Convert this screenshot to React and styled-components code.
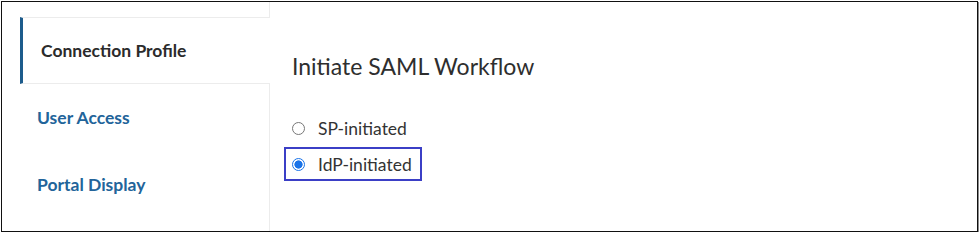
import React, { useState } from "react";
import styled, { createGlobalStyle } from "styled-components";

const GlobalStyle = createGlobalStyle`
  html, body {
    margin: 0;
    padding: 0;
    background: #fff;
  }
  body {
    font-family: Lato, "Open Sans", "Liberation Sans", sans-serif;
  }
`;

const Frame = styled.div`
  box-sizing: border-box;
  margin: 1px 0 0 1px;
  width: 977px;
  height: 231px;
  border: 1px solid #111;
  box-shadow: 1px 1px 0 #8a8a8a;
  display: flex;
  overflow: hidden;
  background: #fff;
`;

const Sidebar = styled.nav`
  width: 250px;
  margin-left: 18px;
  display: flex;
  flex-direction: column;
  flex-shrink: 0;
`;

const TabStub = styled.div`
  height: 15px;
  border-right: 1px solid #ececec;
`;

const Tab = styled.button`
  all: unset;
  box-sizing: border-box;
  height: 67px;
  display: flex;
  align-items: center;
  font-size: 17.5px;
  font-weight: 700;
  cursor: pointer;
  color: ${(p) => (p.$active ? "#2b2b2b" : "#22649a")};
  padding-left: ${(p) => (p.$active ? "18px" : "17px")};
  border-left: ${(p) => (p.$active ? "3px solid #1d5c8c" : "0")};
  border-top: ${(p) => (p.$active ? "1px solid #ececec" : "0")};
  border-bottom: ${(p) => (p.$active ? "1px solid #ececec" : "0")};
  border-right: ${(p) => (p.$active ? "0" : "1px solid #ececec")};
`;

const TabFill = styled.div`
  flex: 1;
  border-right: 1px solid #ececec;
`;

const Main = styled.main`
  flex: 1;
  padding: 50px 0 0 14px;
  display: flex;
  flex-direction: column;
  align-items: flex-start;
`;

const Heading = styled.h2`
  margin: 0 0 31px 8px;
  font-size: 23px;
  line-height: 28px;
  font-weight: 400;
  color: #2e2e2e;
`;

const Options = styled.div`
  display: flex;
  flex-direction: column;
  gap: 2px;
`;

const Option = styled.label`
  box-sizing: border-box;
  height: 34px;
  display: inline-flex;
  align-items: center;
  gap: 13px;
  padding: 0 8px 0 6px;
  border: 2px solid ${(p) => (p.$focused ? "#3b3fc6" : "transparent")};
  font-size: 17.5px;
  color: #333;
  cursor: pointer;
`;

const Radio = styled.span`
  box-sizing: border-box;
  width: 13px;
  height: 13px;
  border-radius: 50%;
  border: 1px solid ${(p) => (p.$checked ? "#1a73e8" : "#777")};
  background: ${(p) =>
    p.$checked
      ? "radial-gradient(circle, #1a73e8 0 3.8px, #fff 4.4px)"
      : "#fff"};
  flex-shrink: 0;
`;

const tabs = ["Connection Profile", "User Access", "Portal Display"];
const flows = ["SP-initiated", "IdP-initiated"];

export default function App() {
  const [active, setActive] = useState(0);
  const [flow, setFlow] = useState(1);

  return (
    <>
      <GlobalStyle />
      <Frame>
        <Sidebar>
          <TabStub />
          {tabs.map((t, i) => (
            <Tab key={t} $active={i === active} onClick={() => setActive(i)}>
              {t}
            </Tab>
          ))}
          <TabFill />
        </Sidebar>
        <Main>
          <Heading>Initiate SAML Workflow</Heading>
          <Options>
            {flows.map((f, i) => (
              <Option key={f} $focused={i === flow} onClick={() => setFlow(i)}>
                <Radio $checked={i === flow} />
                {f}
              </Option>
            ))}
          </Options>
        </Main>
      </Frame>
    </>
  );
}
